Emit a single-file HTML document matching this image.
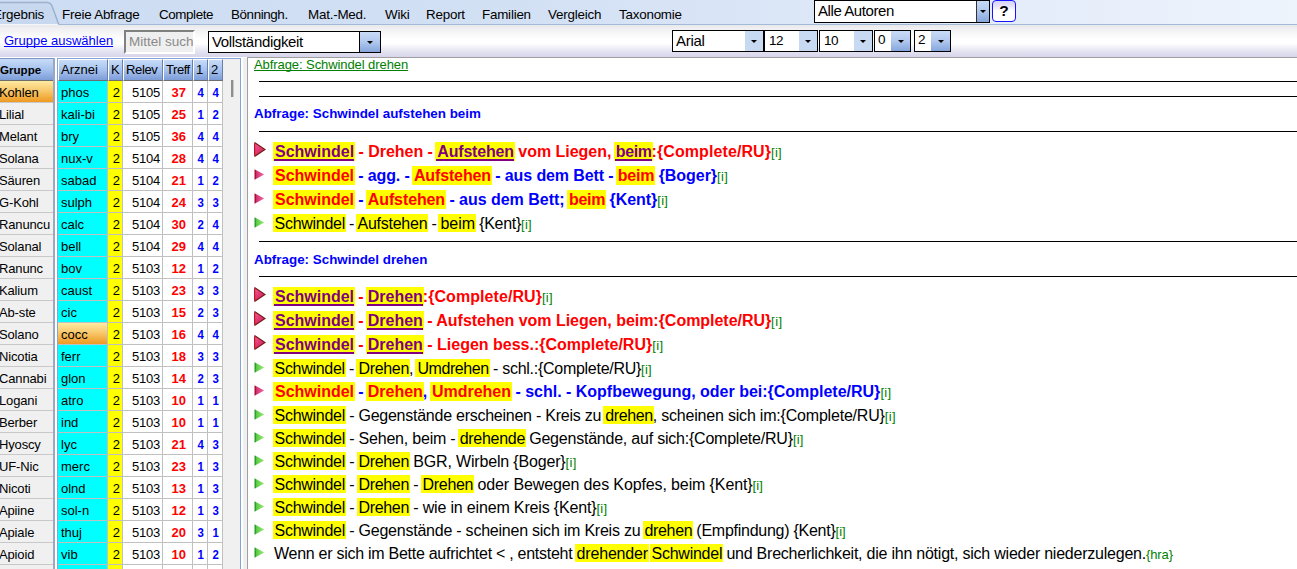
<!DOCTYPE html>
<html lang="de"><head><meta charset="utf-8"><title>Ergebnis</title>
<style>
*{box-sizing:border-box;margin:0;padding:0;text-decoration-skip-ink:none}
html,body{width:1297px;height:569px;overflow:hidden;background:#fff}
body{position:relative;font-family:"Liberation Sans",sans-serif;font-size:13px;color:#000}
#tabbar{position:absolute;left:0;top:0;width:1297px;height:25px;background:linear-gradient(90deg,#ccdcf2 0,#d2e0f4 38%,#dbe6f7 60%,#e5edfa 80%,#eef4fc 100%);border-bottom:1px solid #a3b9d8}
#tabbar .t{position:absolute;top:7px;font-size:13.4px;letter-spacing:-0.22px;line-height:16px;white-space:nowrap;color:#000}
#tabact{position:absolute;left:0;top:0}
#tb2{position:absolute;left:0;top:25px;width:1297px;height:32px;background:linear-gradient(#e9e9eb 0,#f3f3f5 18%,#ffffff 45%,#ffffff 58%,#e6e5f2 80%,#d6d4ea 100%)}
#glink{position:absolute;left:4px;top:8px;font-size:13px;line-height:16px;color:#0000ff;text-decoration:underline;white-space:nowrap}
#msuch{position:absolute;left:124px;top:5px;width:71px;height:24px;background:#efefef;border:2px solid;border-color:#808080 #fff #fff #808080;overflow:hidden;font-size:13.5px;line-height:20px;color:#8a8a8a;white-space:nowrap;padding-left:3px}
.sel{position:absolute;background:#fff;border:1px solid #000;font-size:15px;white-space:nowrap;overflow:hidden}
.sel .tx{position:absolute;left:3px;top:0}
.sel .bt{position:absolute;right:0;top:0;bottom:0;background:#c7daf2}
.sel .bt.dk{background:linear-gradient(#c9dcf6 0,#b4cbef 45%,#86a6dd 100%)}
.sel .bt.bd{border-left:1px solid #000}
.sel .bt:after{content:"";position:absolute;left:50%;top:50%;margin-left:-3px;margin-top:-1px;border-left:3px solid transparent;border-right:3px solid transparent;border-top:3px solid #000}
#help{position:absolute;left:992px;top:0;width:24px;height:22px;border:1px solid #1414ff;border-radius:4px;background:linear-gradient(#d6d2f8 0,#e6e3fb 25%,#fff 50%);font-weight:bold;font-size:15.5px;line-height:19px;text-align:center}

#gpanel{position:absolute;left:0;top:58px;width:55px;height:511px;background:#f0f0f0;border-right:2px solid #9aa8c0;border-top:1px solid #7b96c4}
.gh{position:absolute;left:0;top:0;width:53px;height:22px;background:linear-gradient(#c8dcf8 0,#a6c2ed 50%,#7d9dd8 100%);font-weight:bold;font-size:11.6px;line-height:21px;border-bottom:1px solid #6e6e6e}
.gr{position:absolute;left:0;width:53px;height:22px;border-bottom:1px solid #c8c8c8;font-size:13px;line-height:23px;white-space:nowrap;overflow:hidden}
.gr span{position:relative;left:-1px;letter-spacing:-0.15px}
.gr.gsel{position:absolute;border:0;border-bottom:1px solid #c8c8c8;background:linear-gradient(#fdeaa2 0,#f8c96e 45%,#f0a22e 90%,#ee9a22 100%)}

#apanel{position:absolute;left:57px;top:58px;width:184px;height:511px;background:#fff;border:1px solid #86a4d8;border-bottom:0}
#track{position:absolute;left:165px;top:0;width:17px;height:511px;background:#f0f0f0}
.ah{position:absolute;top:0;height:22px;background:linear-gradient(#c8dcf8 0,#a6c2ed 50%,#7d9dd8 100%);border:1px solid;border-color:#fff #6a80ac #6e6e6e #fff;font-size:13px;line-height:19px;white-space:nowrap;overflow:hidden}
.ah span{position:relative;left:2px}
.ar{position:absolute;left:0;width:165px;height:22px}
.c{position:absolute;top:0;height:22px;border-right:1px solid #c0c0c0;border-bottom:1px solid #c0c0c0;font-size:13px;line-height:23px;white-space:nowrap;overflow:hidden;background:#fff}
.ca{left:0;width:50px;background:#00ffff;padding-left:3px}
.ca.asel{background:linear-gradient(#fdeaa2 0,#f8c96e 45%,#f0a22e 90%,#ee9a22 100%)}
.ck{left:50px;width:15px;background:#ffff00;text-align:right;padding-right:2px}
.cr{left:65px;width:40px;text-align:right;padding-right:2px;letter-spacing:-0.25px}
.ct{left:105px;width:30px;text-align:right;padding-right:6px;color:#ff0000;font-weight:bold}
.c1{left:135px;width:15px;text-align:right;padding-right:3px;color:#0000ff;font-weight:bold}
.c2{left:150px;width:15px;text-align:right;padding-right:3px;color:#0000ff;font-weight:bold}
.n{display:inline-block;transform:scaleX(0.88);transform-origin:50% 50%}
#thumb{position:absolute;left:173px;top:21px;width:2px;height:17px;background:#8e8e8e;box-shadow:1px 0 0 #c8c8c8}

#gap{position:absolute;left:241px;top:58px;width:6px;height:511px;background:linear-gradient(90deg,#fff 0,#fff 2px,#f0f0f0 2px)}
#cpanel{position:absolute;left:247px;top:57px;width:1050px;height:512px;background:#fff;border-left:1px solid #a0a0a0;border-top:1px solid #a0a0a0}
.hr{position:absolute;height:1px;background:#000;right:0}
.ln{position:absolute;white-space:pre;font-size:16px;line-height:20px;height:20px}
.s{display:inline-block;height:18px;vertical-align:top}
.b .s{height:19px}
.s.y{box-sizing:content-box;padding:0 1px 0 2px;margin:0 -1px 0 -2px}
.b{font-weight:bold}
.y{background:#ffff00}
.rd{color:#ff0000}.bl{color:#0000ff}.pu{color:#800080}
.s.y.pu{background:linear-gradient(#800080,#800080) no-repeat 1px 17px / calc(100% - 2px) 2px,#ffff00}
.i{display:inline-block;vertical-align:top;height:18px;line-height:21px;color:#008000;font-size:13px;font-weight:normal}
.tri{position:absolute;left:7px}
.q{position:absolute;left:6px;font-weight:bold;color:#0000ff;font-size:13.4px;line-height:16px;white-space:nowrap}
#q0{position:absolute;left:6px;top:-1px;color:#008000;text-decoration:underline;letter-spacing:-0.08px;font-size:13px;line-height:15px;white-space:nowrap}

</style></head>
<body>
<div id="tabbar">
<svg id="tabact" width="62" height="25" viewBox="0 0 62 25"><path d="M-3 2.5 H47 Q50.5 2.5 52 6 L58.5 24 H-3 Z" fill="#c8d9ef"/><path d="M-3 24.5 H58.5" stroke="#f3f6fb" stroke-width="1" fill="none"/><path d="M-3 2.4 H47 Q50.5 2.4 52 6 L58.8 24.6" fill="none" stroke="#9db1cc" stroke-width="1.5"/></svg>
<div class="t" style="left:-7px">Ergebnis</div>
<div class="t" style="left:62px">Freie Abfrage</div>
<div class="t" style="left:159px;letter-spacing:-0.4px">Complete</div>
<div class="t" style="left:231px;letter-spacing:-0.4px">Bönningh.</div>
<div class="t" style="left:308px">Mat.-Med.</div>
<div class="t" style="left:385px">Wiki</div>
<div class="t" style="left:426px">Report</div>
<div class="t" style="left:482px">Familien</div>
<div class="t" style="left:548px">Vergleich</div>
<div class="t" style="left:619px">Taxonomie</div>
<div class="sel" style="left:814px;top:0;width:176px;height:23px;font-size:15px;line-height:20px;letter-spacing:-0.42px"><span class="tx" style="left:3px;top:0">Alle Autoren</span><span class="bt dk" style="width:13px;border-left:1px solid #333;top:-2px"></span></div>
<div id="help">?</div>
</div>
<div id="tb2">
<div id="glink">Gruppe auswählen</div>
<div id="msuch">Mittel suchen</div>
<div class="sel" style="left:208px;top:6px;width:173px;height:22px;font-size:15px;line-height:20px;letter-spacing:-0.33px"><span class="tx" style="left:3px">Vollständigkeit</span><span class="bt dk bd" style="width:21px"></span></div>
<div class="sel" style="left:672px;top:5px;width:92px;height:22px;font-size:15px;line-height:20px;letter-spacing:-0.3px"><span class="tx">Arial</span><span class="bt" style="width:18px"></span></div>
<div class="sel" style="left:764px;top:5px;width:54px;height:22px;font-size:13.5px;letter-spacing:-0.4px;line-height:20px"><span class="tx" style="left:4px">12</span><span class="bt" style="width:18px"></span></div>
<div class="sel" style="left:819px;top:5px;width:54px;height:22px;font-size:13.5px;letter-spacing:-0.4px;line-height:20px"><span class="tx" style="left:4px">10</span><span class="bt" style="width:18px"></span></div>
<div class="sel" style="left:874px;top:5px;width:37px;height:22px;font-size:13.5px;line-height:20px"><span class="tx" style="top:-1px">0</span><span class="bt dk" style="width:19px"></span></div>
<div class="sel" style="left:914px;top:5px;width:37px;height:22px;font-size:13.5px;line-height:20px"><span class="tx" style="top:-1px">2</span><span class="bt dk" style="width:19px"></span></div>
</div>
<div id="gpanel">
<div class="gh">Gruppe</div>
<div class="gr gsel" style="top:22px"><span>Kohlen</span></div>
<div class="gr" style="top:44px"><span>Lilial</span></div>
<div class="gr" style="top:66px"><span>Melant</span></div>
<div class="gr" style="top:88px"><span>Solana</span></div>
<div class="gr" style="top:110px"><span>Säuren</span></div>
<div class="gr" style="top:132px"><span>G-Kohl</span></div>
<div class="gr" style="top:154px"><span>Ranuncu</span></div>
<div class="gr" style="top:176px"><span>Solanal</span></div>
<div class="gr" style="top:198px"><span>Ranunc</span></div>
<div class="gr" style="top:220px"><span>Kalium</span></div>
<div class="gr" style="top:242px"><span>Ab-ste</span></div>
<div class="gr" style="top:264px"><span>Solano</span></div>
<div class="gr" style="top:286px"><span>Nicotia</span></div>
<div class="gr" style="top:308px"><span>Cannabi</span></div>
<div class="gr" style="top:330px"><span>Logani</span></div>
<div class="gr" style="top:352px"><span>Berber</span></div>
<div class="gr" style="top:374px"><span>Hyoscy</span></div>
<div class="gr" style="top:396px"><span>UF-Nic</span></div>
<div class="gr" style="top:418px"><span>Nicoti</span></div>
<div class="gr" style="top:440px"><span>Apiine</span></div>
<div class="gr" style="top:462px"><span>Apiale</span></div>
<div class="gr" style="top:484px"><span>Apioid</span></div>
<div class="gr" style="top:506px"><span></span></div>
</div>
<div id="apanel">
<div class="ah" style="left:0;width:50px"><span>Arznei</span></div><div class="ah" style="left:50px;width:15px"><span>K</span></div><div class="ah" style="left:65px;width:40px"><span style="letter-spacing:-0.35px">Relev</span></div><div class="ah" style="left:105px;width:30px"><span style="letter-spacing:-0.45px">Treff</span></div><div class="ah" style="left:135px;width:15px"><span>1</span></div><div class="ah" style="left:150px;width:15px"><span>2</span></div>
<div class="ar" style="top:22px"><div class="c ca"><span>phos</span></div><div class="c ck">2</div><div class="c cr">5105</div><div class="c ct">37</div><div class="c c1"><b class="n">4</b></div><div class="c c2"><b class="n">4</b></div></div>
<div class="ar" style="top:44px"><div class="c ca"><span>kali-bi</span></div><div class="c ck">2</div><div class="c cr">5105</div><div class="c ct">25</div><div class="c c1"><b class="n">1</b></div><div class="c c2"><b class="n">2</b></div></div>
<div class="ar" style="top:66px"><div class="c ca"><span>bry</span></div><div class="c ck">2</div><div class="c cr">5105</div><div class="c ct">36</div><div class="c c1"><b class="n">4</b></div><div class="c c2"><b class="n">4</b></div></div>
<div class="ar" style="top:88px"><div class="c ca"><span>nux-v</span></div><div class="c ck">2</div><div class="c cr">5104</div><div class="c ct">28</div><div class="c c1"><b class="n">4</b></div><div class="c c2"><b class="n">4</b></div></div>
<div class="ar" style="top:110px"><div class="c ca"><span>sabad</span></div><div class="c ck">2</div><div class="c cr">5104</div><div class="c ct">21</div><div class="c c1"><b class="n">1</b></div><div class="c c2"><b class="n">2</b></div></div>
<div class="ar" style="top:132px"><div class="c ca"><span>sulph</span></div><div class="c ck">2</div><div class="c cr">5104</div><div class="c ct">24</div><div class="c c1"><b class="n">3</b></div><div class="c c2"><b class="n">3</b></div></div>
<div class="ar" style="top:154px"><div class="c ca"><span>calc</span></div><div class="c ck">2</div><div class="c cr">5104</div><div class="c ct">30</div><div class="c c1"><b class="n">2</b></div><div class="c c2"><b class="n">4</b></div></div>
<div class="ar" style="top:176px"><div class="c ca"><span>bell</span></div><div class="c ck">2</div><div class="c cr">5104</div><div class="c ct">29</div><div class="c c1"><b class="n">4</b></div><div class="c c2"><b class="n">4</b></div></div>
<div class="ar" style="top:198px"><div class="c ca"><span>bov</span></div><div class="c ck">2</div><div class="c cr">5103</div><div class="c ct">12</div><div class="c c1"><b class="n">1</b></div><div class="c c2"><b class="n">2</b></div></div>
<div class="ar" style="top:220px"><div class="c ca"><span>caust</span></div><div class="c ck">2</div><div class="c cr">5103</div><div class="c ct">23</div><div class="c c1"><b class="n">3</b></div><div class="c c2"><b class="n">3</b></div></div>
<div class="ar" style="top:242px"><div class="c ca"><span>cic</span></div><div class="c ck">2</div><div class="c cr">5103</div><div class="c ct">15</div><div class="c c1"><b class="n">2</b></div><div class="c c2"><b class="n">3</b></div></div>
<div class="ar" style="top:264px"><div class="c ca asel"><span>cocc</span></div><div class="c ck">2</div><div class="c cr">5103</div><div class="c ct">16</div><div class="c c1"><b class="n">4</b></div><div class="c c2"><b class="n">4</b></div></div>
<div class="ar" style="top:286px"><div class="c ca"><span>ferr</span></div><div class="c ck">2</div><div class="c cr">5103</div><div class="c ct">18</div><div class="c c1"><b class="n">3</b></div><div class="c c2"><b class="n">3</b></div></div>
<div class="ar" style="top:308px"><div class="c ca"><span>glon</span></div><div class="c ck">2</div><div class="c cr">5103</div><div class="c ct">14</div><div class="c c1"><b class="n">2</b></div><div class="c c2"><b class="n">3</b></div></div>
<div class="ar" style="top:330px"><div class="c ca"><span>atro</span></div><div class="c ck">2</div><div class="c cr">5103</div><div class="c ct">10</div><div class="c c1"><b class="n">1</b></div><div class="c c2"><b class="n">1</b></div></div>
<div class="ar" style="top:352px"><div class="c ca"><span>ind</span></div><div class="c ck">2</div><div class="c cr">5103</div><div class="c ct">10</div><div class="c c1"><b class="n">1</b></div><div class="c c2"><b class="n">1</b></div></div>
<div class="ar" style="top:374px"><div class="c ca"><span>lyc</span></div><div class="c ck">2</div><div class="c cr">5103</div><div class="c ct">21</div><div class="c c1"><b class="n">4</b></div><div class="c c2"><b class="n">3</b></div></div>
<div class="ar" style="top:396px"><div class="c ca"><span>merc</span></div><div class="c ck">2</div><div class="c cr">5103</div><div class="c ct">23</div><div class="c c1"><b class="n">1</b></div><div class="c c2"><b class="n">3</b></div></div>
<div class="ar" style="top:418px"><div class="c ca"><span>olnd</span></div><div class="c ck">2</div><div class="c cr">5103</div><div class="c ct">13</div><div class="c c1"><b class="n">1</b></div><div class="c c2"><b class="n">3</b></div></div>
<div class="ar" style="top:440px"><div class="c ca"><span>sol-n</span></div><div class="c ck">2</div><div class="c cr">5103</div><div class="c ct">12</div><div class="c c1"><b class="n">1</b></div><div class="c c2"><b class="n">3</b></div></div>
<div class="ar" style="top:462px"><div class="c ca"><span>thuj</span></div><div class="c ck">2</div><div class="c cr">5103</div><div class="c ct">20</div><div class="c c1"><b class="n">3</b></div><div class="c c2"><b class="n">1</b></div></div>
<div class="ar" style="top:484px"><div class="c ca"><span>vib</span></div><div class="c ck">2</div><div class="c cr">5103</div><div class="c ct">10</div><div class="c c1"><b class="n">1</b></div><div class="c c2"><b class="n">2</b></div></div>
<div class="ar" style="top:506px"><div class="c ca"><span></span></div><div class="c ck">2</div><div class="c cr"></div><div class="c ct"></div><div class="c c1"><b class="n"></b></div><div class="c c2"><b class="n"></b></div></div>
<div id="track"></div><div id="thumb"></div>
</div>
<div id="gap"></div>
<div id="cpanel">
<div id="q0">Abfrage: Schwindel drehen</div>
<div class="hr" style="top:23px;left:11px"></div>
<div class="hr" style="top:38px;left:11px"></div>
<div class="hr" style="top:73px;left:11px"></div>
<div class="hr" style="top:183px;left:11px"></div>
<div class="hr" style="top:218px;left:11px"></div>
<div class="q" style="top:48px">Abfrage: Schwindel aufstehen beim</div>
<div class="q" style="top:194px">Abfrage: Schwindel drehen</div>
<svg class="tri" style="left:6px;top:84px" width="13" height="15" viewBox="0 0 13 15"><defs><linearGradient id="gR84" x1="0" y1="0" x2="0.6" y2="1"><stop offset="0" stop-color="#f4609a"/><stop offset="0.5" stop-color="#e63c78"/><stop offset="1" stop-color="#c8245a"/></linearGradient></defs><path d="M0.5 0.5 L11 7.5 L0.5 14.5 Z" fill="url(#gR84)"/><path d="M0.5 0.5 L11 7.5 L0.5 14.5" fill="none" stroke="#6e1a10" stroke-width="1.1" stroke-linejoin="miter"/><path d="M0.6 1.2 V13.8" fill="none" stroke="#c01424" stroke-width="1.2"/></svg>
<div class="ln b rd" style="top:84px;left:27.0px"><span class="s y pu" style="width:79.2px;letter-spacing:0.01px">Schwindel</span><span class="s" style="width:83.1px;letter-spacing:-0.04px"> - Drehen - </span><span class="s y pu" style="width:76.6px;letter-spacing:-0.18px">Aufstehen</span><span class="s" style="width:101.9px;letter-spacing:-0.03px"> vom Liegen, </span><span class="s y pu" style="width:35.8px;letter-spacing:-0.39px">beim</span><span class="s" style="width:119.5px;letter-spacing:0.09px">:{Complete/RU}</span><span class="i" style="letter-spacing:0.22px">[i]</span></div>
<svg class="tri" style="left:6px;top:111px" width="11" height="11" viewBox="0 0 11 11"><defs><linearGradient id="gr108" x1="0" y1="0" x2="1" y2="0"><stop offset="0" stop-color="#ac0c34"/><stop offset="0.1" stop-color="#ac0c34"/><stop offset="0.22" stop-color="#d63474"/><stop offset="1" stop-color="#ea6aa0"/></linearGradient></defs><path d="M0.5 0.3 L10.2 5.5 L0.5 10.7 Z" fill="url(#gr108)"/></svg>
<div class="ln b bl" style="top:108px;left:27.0px"><span class="s y rd" style="width:79.0px;letter-spacing:-0.01px">Schwindel</span><span class="s" style="width:59.9px;letter-spacing:-0.14px"> - agg. - </span><span class="s y rd" style="width:77.1px;letter-spacing:-0.13px">Aufstehen</span><span class="s" style="width:126.8px;letter-spacing:-0.12px"> - aus dem Bett - </span><span class="s y rd" style="width:36.5px;letter-spacing:-0.21px">beim</span><span class="s" style="width:62.7px;letter-spacing:-0.05px"> {Boger}</span><span class="i" style="letter-spacing:0.42px">[i]</span></div>
<svg class="tri" style="left:6px;top:135px" width="11" height="11" viewBox="0 0 11 11"><defs><linearGradient id="gr132" x1="0" y1="0" x2="1" y2="0"><stop offset="0" stop-color="#ac0c34"/><stop offset="0.1" stop-color="#ac0c34"/><stop offset="0.22" stop-color="#d63474"/><stop offset="1" stop-color="#ea6aa0"/></linearGradient></defs><path d="M0.5 0.3 L10.2 5.5 L0.5 10.7 Z" fill="url(#gr132)"/></svg>
<div class="ln b bl" style="top:132px;left:27.0px"><span class="s y rd" style="width:79.0px;letter-spacing:-0.01px">Schwindel</span><span class="s" style="width:13.8px;letter-spacing:-0.14px"> - </span><span class="s y rd" style="width:77.2px;letter-spacing:-0.11px">Aufstehen</span><span class="s" style="width:124.0px;letter-spacing:-0.03px"> - aus dem Bett; </span><span class="s y rd" style="width:36.2px;letter-spacing:-0.29px">beim</span><span class="s" style="width:52.1px;letter-spacing:-0.05px"> {Kent}</span><span class="i" style="letter-spacing:0.29px">[i]</span></div>
<svg class="tri" style="left:6px;top:159px" width="11" height="11" viewBox="0 0 11 11"><defs><linearGradient id="gg156" x1="0" y1="0" x2="1" y2="0"><stop offset="0" stop-color="#2a9e2a"/><stop offset="0.1" stop-color="#2a9e2a"/><stop offset="0.22" stop-color="#5cce44"/><stop offset="1" stop-color="#98e878"/></linearGradient></defs><path d="M0.5 0.3 L10.2 5.5 L0.5 10.7 Z" fill="url(#gg156)"/></svg>
<div class="ln " style="top:156px;left:26.5px"><span class="s y" style="width:70.5px;letter-spacing:-0.27px">Schwindel</span><span class="s" style="width:12.5px;letter-spacing:-0.57px"> - </span><span class="s y" style="width:69.8px;letter-spacing:-0.25px">Aufstehen</span><span class="s" style="width:13.2px;letter-spacing:-0.34px"> - </span><span class="s y" style="width:34.5px;letter-spacing:-0.05px">beim</span><span class="s" style="width:46.1px;letter-spacing:-0.28px"> {Kent}</span><span class="i" style="letter-spacing:0.26px">[i]</span></div>
<svg class="tri" style="left:6px;top:229px" width="13" height="15" viewBox="0 0 13 15"><defs><linearGradient id="gR229" x1="0" y1="0" x2="0.6" y2="1"><stop offset="0" stop-color="#f4609a"/><stop offset="0.5" stop-color="#e63c78"/><stop offset="1" stop-color="#c8245a"/></linearGradient></defs><path d="M0.5 0.5 L11 7.5 L0.5 14.5 Z" fill="url(#gR229)"/><path d="M0.5 0.5 L11 7.5 L0.5 14.5" fill="none" stroke="#6e1a10" stroke-width="1.1" stroke-linejoin="miter"/><path d="M0.6 1.2 V13.8" fill="none" stroke="#c01424" stroke-width="1.2"/></svg>
<div class="ln b rd" style="top:229px;left:27.0px"><span class="s y pu" style="width:79.0px;letter-spacing:-0.01px">Schwindel</span><span class="s" style="width:13.8px;letter-spacing:-0.14px"> - </span><span class="s y pu" style="width:55.0px;letter-spacing:-0.02px">Drehen</span><span class="s" style="width:119.2px;letter-spacing:0.07px">:{Complete/RU}</span><span class="i" style="letter-spacing:0.22px">[i]</span></div>
<svg class="tri" style="left:6px;top:253px" width="13" height="15" viewBox="0 0 13 15"><defs><linearGradient id="gR253" x1="0" y1="0" x2="0.6" y2="1"><stop offset="0" stop-color="#f4609a"/><stop offset="0.5" stop-color="#e63c78"/><stop offset="1" stop-color="#c8245a"/></linearGradient></defs><path d="M0.5 0.5 L11 7.5 L0.5 14.5 Z" fill="url(#gR253)"/><path d="M0.5 0.5 L11 7.5 L0.5 14.5" fill="none" stroke="#6e1a10" stroke-width="1.1" stroke-linejoin="miter"/><path d="M0.6 1.2 V13.8" fill="none" stroke="#c01424" stroke-width="1.2"/></svg>
<div class="ln b rd" style="top:253px;left:27.0px"><span class="s y pu" style="width:79.0px;letter-spacing:-0.01px">Schwindel</span><span class="s" style="width:13.8px;letter-spacing:-0.14px"> - </span><span class="s y pu" style="width:55.0px;letter-spacing:-0.02px">Drehen</span><span class="s" style="width:348.3px;letter-spacing:-0.03px"> - Aufstehen vom Liegen, beim:{Complete/RU}</span><span class="i" style="letter-spacing:0.42px">[i]</span></div>
<svg class="tri" style="left:6px;top:277px" width="13" height="15" viewBox="0 0 13 15"><defs><linearGradient id="gR277" x1="0" y1="0" x2="0.6" y2="1"><stop offset="0" stop-color="#f4609a"/><stop offset="0.5" stop-color="#e63c78"/><stop offset="1" stop-color="#c8245a"/></linearGradient></defs><path d="M0.5 0.5 L11 7.5 L0.5 14.5 Z" fill="url(#gR277)"/><path d="M0.5 0.5 L11 7.5 L0.5 14.5" fill="none" stroke="#6e1a10" stroke-width="1.1" stroke-linejoin="miter"/><path d="M0.6 1.2 V13.8" fill="none" stroke="#c01424" stroke-width="1.2"/></svg>
<div class="ln b rd" style="top:277px;left:27.0px"><span class="s y pu" style="width:79.0px;letter-spacing:-0.01px">Schwindel</span><span class="s" style="width:13.8px;letter-spacing:-0.14px"> - </span><span class="s y pu" style="width:55.0px;letter-spacing:-0.02px">Drehen</span><span class="s" style="width:229.5px;letter-spacing:0.00px"> - Liegen bess.:{Complete/RU}</span><span class="i" style="letter-spacing:0.29px">[i]</span></div>
<svg class="tri" style="left:6px;top:304px" width="11" height="11" viewBox="0 0 11 11"><defs><linearGradient id="gg301" x1="0" y1="0" x2="1" y2="0"><stop offset="0" stop-color="#2a9e2a"/><stop offset="0.1" stop-color="#2a9e2a"/><stop offset="0.22" stop-color="#5cce44"/><stop offset="1" stop-color="#98e878"/></linearGradient></defs><path d="M0.5 0.3 L10.2 5.5 L0.5 10.7 Z" fill="url(#gg301)"/></svg>
<div class="ln " style="top:301px;left:26.5px"><span class="s y" style="width:70.3px;letter-spacing:-0.29px">Schwindel</span><span class="s" style="width:13.7px;letter-spacing:-0.17px"> - </span><span class="s y" style="width:50.5px;letter-spacing:-0.33px">Drehen</span><span class="s" style="width:8.5px;letter-spacing:-0.20px">, </span><span class="s y" style="width:71.3px;letter-spacing:-0.43px">Umdrehen</span><span class="s" style="width:152.3px;letter-spacing:-0.27px"> - schl.:{Complete/RU}</span><span class="i" style="letter-spacing:0.22px">[i]</span></div>
<svg class="tri" style="left:6px;top:327px" width="11" height="11" viewBox="0 0 11 11"><defs><linearGradient id="gr324" x1="0" y1="0" x2="1" y2="0"><stop offset="0" stop-color="#ac0c34"/><stop offset="0.1" stop-color="#ac0c34"/><stop offset="0.22" stop-color="#d63474"/><stop offset="1" stop-color="#ea6aa0"/></linearGradient></defs><path d="M0.5 0.3 L10.2 5.5 L0.5 10.7 Z" fill="url(#gr324)"/></svg>
<div class="ln b bl" style="top:324px;left:27.0px"><span class="s y rd" style="width:79.0px;letter-spacing:-0.01px">Schwindel</span><span class="s" style="width:13.8px;letter-spacing:-0.14px"> - </span><span class="s y rd" style="width:55.0px;letter-spacing:-0.02px">Drehen</span><span class="s" style="width:9.2px;letter-spacing:0.15px">, </span><span class="s y rd" style="width:79.0px;letter-spacing:-0.02px">Umdrehen</span><span class="s" style="width:369.4px;letter-spacing:-0.01px"> - schl. - Kopfbewegung, oder bei:{Complete/RU}</span><span class="i" style="letter-spacing:0.26px">[i]</span></div>
<svg class="tri" style="left:6px;top:351px" width="11" height="11" viewBox="0 0 11 11"><defs><linearGradient id="gg348" x1="0" y1="0" x2="1" y2="0"><stop offset="0" stop-color="#2a9e2a"/><stop offset="0.1" stop-color="#2a9e2a"/><stop offset="0.22" stop-color="#5cce44"/><stop offset="1" stop-color="#98e878"/></linearGradient></defs><path d="M0.5 0.3 L10.2 5.5 L0.5 10.7 Z" fill="url(#gg348)"/></svg>
<div class="ln " style="top:348px;left:26.5px"><span class="s y" style="width:70.5px;letter-spacing:-0.27px">Schwindel</span><span class="s" style="width:260.2px;letter-spacing:-0.25px"> - Gegenstände erscheinen - Kreis zu </span><span class="s y" style="width:47.6px;letter-spacing:-0.37px">drehen</span><span class="s" style="width:232.0px;letter-spacing:-0.20px">, scheinen sich im:{Complete/RU}</span><span class="i" style="letter-spacing:0.32px">[i]</span></div>
<svg class="tri" style="left:6px;top:374px" width="11" height="11" viewBox="0 0 11 11"><defs><linearGradient id="gg371" x1="0" y1="0" x2="1" y2="0"><stop offset="0" stop-color="#2a9e2a"/><stop offset="0.1" stop-color="#2a9e2a"/><stop offset="0.22" stop-color="#5cce44"/><stop offset="1" stop-color="#98e878"/></linearGradient></defs><path d="M0.5 0.3 L10.2 5.5 L0.5 10.7 Z" fill="url(#gg371)"/></svg>
<div class="ln " style="top:371px;left:26.5px"><span class="s y" style="width:70.5px;letter-spacing:-0.27px">Schwindel</span><span class="s" style="width:114.7px;letter-spacing:-0.21px"> - Sehen, beim - </span><span class="s y" style="width:65.3px;letter-spacing:-0.29px">drehende</span><span class="s" style="width:267.9px;letter-spacing:-0.22px"> Gegenstände, auf sich:{Complete/RU}</span><span class="i" style="letter-spacing:0.19px">[i]</span></div>
<svg class="tri" style="left:6px;top:397px" width="11" height="11" viewBox="0 0 11 11"><defs><linearGradient id="gg394" x1="0" y1="0" x2="1" y2="0"><stop offset="0" stop-color="#2a9e2a"/><stop offset="0.1" stop-color="#2a9e2a"/><stop offset="0.22" stop-color="#5cce44"/><stop offset="1" stop-color="#98e878"/></linearGradient></defs><path d="M0.5 0.3 L10.2 5.5 L0.5 10.7 Z" fill="url(#gg394)"/></svg>
<div class="ln " style="top:394px;left:26.5px"><span class="s y" style="width:70.5px;letter-spacing:-0.27px">Schwindel</span><span class="s" style="width:13.5px;letter-spacing:-0.24px"> - </span><span class="s y" style="width:50.5px;letter-spacing:-0.33px">Drehen</span><span class="s" style="width:156.5px;letter-spacing:-0.17px"> BGR, Wirbeln {Boger}</span><span class="i" style="letter-spacing:0.36px">[i]</span></div>
<svg class="tri" style="left:6px;top:420px" width="11" height="11" viewBox="0 0 11 11"><defs><linearGradient id="gg417" x1="0" y1="0" x2="1" y2="0"><stop offset="0" stop-color="#2a9e2a"/><stop offset="0.1" stop-color="#2a9e2a"/><stop offset="0.22" stop-color="#5cce44"/><stop offset="1" stop-color="#98e878"/></linearGradient></defs><path d="M0.5 0.3 L10.2 5.5 L0.5 10.7 Z" fill="url(#gg417)"/></svg>
<div class="ln " style="top:417px;left:26.5px"><span class="s y" style="width:70.5px;letter-spacing:-0.27px">Schwindel</span><span class="s" style="width:13.5px;letter-spacing:-0.24px"> - </span><span class="s y" style="width:50.5px;letter-spacing:-0.33px">Drehen</span><span class="s" style="width:13.5px;letter-spacing:-0.24px"> - </span><span class="s y" style="width:50.7px;letter-spacing:-0.30px">Drehen</span><span class="s" style="width:279.3px;letter-spacing:-0.12px"> oder Bewegen des Kopfes, beim {Kent}</span><span class="i" style="letter-spacing:0.19px">[i]</span></div>
<svg class="tri" style="left:6px;top:443px" width="11" height="11" viewBox="0 0 11 11"><defs><linearGradient id="gg440" x1="0" y1="0" x2="1" y2="0"><stop offset="0" stop-color="#2a9e2a"/><stop offset="0.1" stop-color="#2a9e2a"/><stop offset="0.22" stop-color="#5cce44"/><stop offset="1" stop-color="#98e878"/></linearGradient></defs><path d="M0.5 0.3 L10.2 5.5 L0.5 10.7 Z" fill="url(#gg440)"/></svg>
<div class="ln " style="top:440px;left:26.5px"><span class="s y" style="width:70.5px;letter-spacing:-0.27px">Schwindel</span><span class="s" style="width:13.5px;letter-spacing:-0.24px"> - </span><span class="s y" style="width:50.5px;letter-spacing:-0.33px">Drehen</span><span class="s" style="width:187.4px;letter-spacing:-0.17px"> - wie in einem Kreis {Kent}</span><span class="i" style="letter-spacing:0.29px">[i]</span></div>
<svg class="tri" style="left:6px;top:466px" width="11" height="11" viewBox="0 0 11 11"><defs><linearGradient id="gg463" x1="0" y1="0" x2="1" y2="0"><stop offset="0" stop-color="#2a9e2a"/><stop offset="0.1" stop-color="#2a9e2a"/><stop offset="0.22" stop-color="#5cce44"/><stop offset="1" stop-color="#98e878"/></linearGradient></defs><path d="M0.5 0.3 L10.2 5.5 L0.5 10.7 Z" fill="url(#gg463)"/></svg>
<div class="ln " style="top:463px;left:26.5px"><span class="s y" style="width:70.5px;letter-spacing:-0.27px">Schwindel</span><span class="s" style="width:299.6px;letter-spacing:-0.23px"> - Gegenstände - scheinen sich im Kreis zu </span><span class="s y" style="width:47.6px;letter-spacing:-0.37px">drehen</span><span class="s" style="width:143.3px;letter-spacing:-0.26px"> (Empfindung) {Kent}</span><span class="i" style="letter-spacing:0.06px">[i]</span></div>
<svg class="tri" style="left:6px;top:489px" width="11" height="11" viewBox="0 0 11 11"><defs><linearGradient id="gg486" x1="0" y1="0" x2="1" y2="0"><stop offset="0" stop-color="#2a9e2a"/><stop offset="0.1" stop-color="#2a9e2a"/><stop offset="0.22" stop-color="#5cce44"/><stop offset="1" stop-color="#98e878"/></linearGradient></defs><path d="M0.5 0.3 L10.2 5.5 L0.5 10.7 Z" fill="url(#gg486)"/></svg>
<div class="ln " style="top:486px;left:26.0px"><span class="s" style="width:302.5px;letter-spacing:-0.27px">Wenn er sich im Bette aufrichtet &lt; , entsteht </span><span class="s y" style="width:71.5px;letter-spacing:-0.16px">drehender</span><span class="s" style="width:3.5px;letter-spacing:-0.95px"> </span><span class="s y" style="width:70.7px;letter-spacing:-0.25px">Schwindel</span><span class="s" style="width:423.9px;letter-spacing:-0.23px"> und Brecherlichkeit, die ihn nötigt, sich wieder niederzulegen.</span><span class="i" style="letter-spacing:-0.14px">{hra}</span></div>
</div>
</body></html>
